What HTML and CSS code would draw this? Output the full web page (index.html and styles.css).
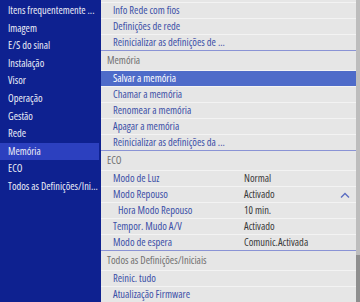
FILE: index.html
```html
<!DOCTYPE html>
<html lang="pt">
<head>
    <meta charset="UTF-8">
    <meta name="viewport" content="width=device-width, initial-scale=1.0">
    <title>Memória</title>
    <link rel="stylesheet" href="styles.css">
</head>
<body>
    <div class="screen">
        <ul class="side">
            <li>Itens frequentemente ...</li>
            <li>Imagem</li>
            <li>E/S do sinal</li>
            <li>Instalação</li>
            <li>Visor</li>
            <li>Operação</li>
            <li>Gestão</li>
            <li>Rede</li>
            <li class="active">Memória</li>
            <li>ECO</li>
            <li>Todos as Definições/Ini...</li>
        </ul>

        <div class="main">
            <ul class="list">
                <li class="item">Info Rede com fios</li>
                <li class="item">Definições de rede</li>
                <li class="item last">Reinicializar as definições de ...</li>

                <li class="group">Memória</li>
                <li class="item selected">Salvar a memória</li>
                <li class="item">Chamar a memória</li>
                <li class="item">Renomear a memória</li>
                <li class="item">Apagar a memória</li>
                <li class="item last">Reinicializar as definições da ...</li>

                <li class="group">ECO</li>
                <li class="item row"><span class="label">Modo de Luz</span><span class="value">Normal</span></li>
                <li class="item row">
                    <span class="label">Modo Repouso</span><span class="value">Activado</span>
                    <svg class="caret" width="10" height="6" viewBox="0 0 10 6"><path d="M1 5.5 L5 1.5 L9 5.5" fill="none" stroke="#5b6dc2" stroke-width="1.4"/></svg>
                </li>
                <li class="item row sub"><span class="label">Hora Modo Repouso</span><span class="value">10 min.</span></li>
                <li class="item row"><span class="label">Tempor. Mudo A/V</span><span class="value">Activado</span></li>
                <li class="item row last"><span class="label">Modo de espera</span><span class="value">Comunic.Activada</span></li>

                <li class="group">Todos as Definições/Iniciais</li>
                <li class="item">Reinic. tudo</li>
                <li class="item">Atualização Firmware</li>
            </ul>
            <div class="scrollbar"><div class="thumb"></div></div>
        </div>
    </div>
</body>
</html>
```

FILE: styles.css
```css
body {
    margin: 0;
    font-family: "Open Sans", "Noto Sans", sans-serif;
    font-stretch: 75%;
    background-color: #e6e6e6;
}
ul {
    list-style: none;
    margin: 0;
    padding: 0;
}
.screen {
    display: flex;
    width: 360px;
    height: 302px;
    overflow: hidden;
}
.side {
    width: 101px;
    flex-shrink: 0;
    padding-top: 2px;
    background-color: #0e2190;
}
.side li {
    height: 17.6px;
    line-height: 17.6px;
    padding-left: 8px;
    margin-right: 2px;
    font-size: 10.4px;
    color: #eceef7;
    white-space: nowrap;
    overflow: hidden;
}
.side li.active {
    background-color: #2c40bf;
}
.main {
    flex: 1;
    display: flex;
    background-color: #e6e6e6;
}
.list {
    flex: 1;
    margin-top: 2px;
    border-top: 1px solid #f3f3f3;
}
.item {
    height: 15px;
    line-height: 15px;
    padding-left: 12px;
    font-size: 10.5px;
    color: #3b4fa6;
    border-bottom: 1px solid #f3f3f3;
    white-space: nowrap;
}
.item.last {
    border-bottom-color: #8a93d5;
}
.item.selected {
    background-color: #4e6bc9;
    color: #ffffff;
}
.group {
    height: 19px;
    line-height: 19px;
    padding-left: 6px;
    font-size: 10.5px;
    color: #707070;
    border-bottom: 1px solid #f3f3f3;
}
.row {
    display: grid;
    grid-template-columns: 131px 1fr 22px;
    align-items: center;
}
.row .value {
    color: #3a3a3a;
}
.sub .label {
    padding-left: 5px;
}
.caret {
    justify-self: center;
}
.scrollbar {
    width: 4px;
    display: flex;
    flex-direction: column;
    background-color: #bdbdbd;
}
.thumb {
    margin-top: auto;
    height: 47px;
    background-color: #8f8f8f;
}
```
